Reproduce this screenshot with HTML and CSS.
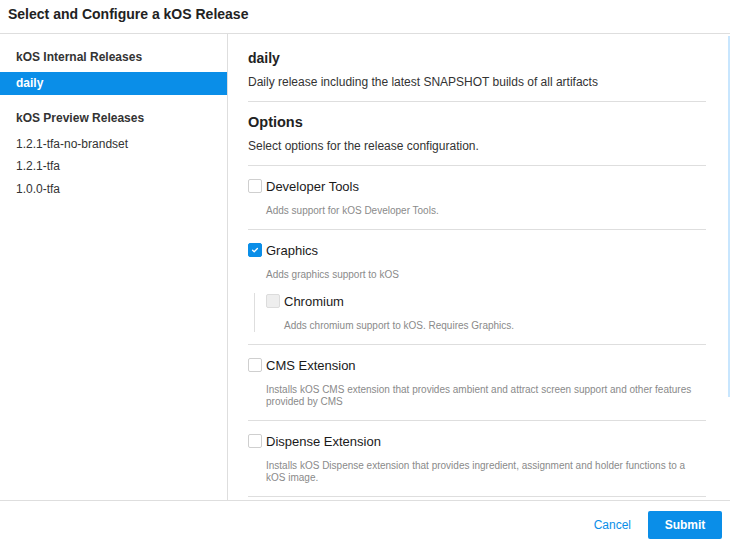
FILE: index.html
```html
<!DOCTYPE html>
<html lang="en">
<head>
<meta charset="utf-8">
<title>Select and Configure a kOS Release</title>
<link rel="stylesheet" href="styles.css">
</head>
<body>
<div class="dialog">
  <header class="dlg-header">
    <h1 class="dlg-title">Select and Configure a kOS Release</h1>
  </header>
  <div class="dlg-body">
    <nav class="sidebar">
      <div class="group">
        <div class="group-title">kOS Internal Releases</div>
        <div class="item selected">daily</div>
      </div>
      <div class="group">
        <div class="group-title">kOS Preview Releases</div>
        <div class="item">1.2.1-tfa-no-brandset</div>
        <div class="item">1.2.1-tfa</div>
        <div class="item">1.0.0-tfa</div>
      </div>
    </nav>
    <div class="content-wrap">
      <main class="content">
        <section class="release">
          <h2 class="release-name">daily</h2>
          <p class="release-desc">Daily release including the latest SNAPSHOT builds of all artifacts</p>
        </section>
        <section class="options">
          <h2 class="options-title">Options</h2>
          <p class="options-desc">Select options for the release configuration.</p>
        </section>
        <div class="option">
          <div class="opt-row"><span class="cb"></span><span class="opt-label">Developer Tools</span></div>
          <div class="opt-desc">Adds support for kOS Developer Tools.</div>
        </div>
        <div class="option">
          <div class="opt-row"><span class="cb checked"><svg viewBox="0 0 14 14" width="14" height="14"><path d="M4.6 7.3 L6.2 8.8 L9.4 5.5" fill="none" stroke="#fff" stroke-width="1.3" stroke-linecap="round" stroke-linejoin="round"/></svg></span><span class="opt-label">Graphics</span></div>
          <div class="opt-desc">Adds graphics support to kOS</div>
          <div class="sub-option">
            <div class="opt-row"><span class="cb disabled"></span><span class="opt-label">Chromium</span></div>
            <div class="opt-desc">Adds chromium support to kOS. Requires Graphics.</div>
          </div>
        </div>
        <div class="option">
          <div class="opt-row"><span class="cb"></span><span class="opt-label">CMS Extension</span></div>
          <div class="opt-desc">Installs kOS CMS extension that provides ambient and attract screen support and other features provided by CMS</div>
        </div>
        <div class="option">
          <div class="opt-row"><span class="cb"></span><span class="opt-label">Dispense Extension</span></div>
          <div class="opt-desc">Installs kOS Dispense extension that provides ingredient, assignment and holder functions to a kOS image.</div>
        </div>
      </main>
      <div class="scroll-thumb"></div>
    </div>
  </div>
  <footer class="dlg-footer">
    <button class="btn btn-text">Cancel</button>
    <button class="btn btn-primary">Submit</button>
  </footer>
</div>
</body>
</html>
```
FILE: styles.css
```css
html, body {
  margin: 0;
  padding: 0;
  background: #fff;
}
body {
  font-family: "Liberation Sans", Arial, sans-serif;
  color: #333;
}
.dialog {
  width: 730px;
  height: 543px;
  display: flex;
  flex-direction: column;
  overflow: hidden;
}
.dlg-header {
  padding: 6px 8px 11px;
  border-bottom: 1px solid #dedede;
}
.dlg-title {
  margin: 0;
  font-size: 14px;
  line-height: 16px;
  font-weight: bold;
  color: #222;
}
.dlg-body {
  display: flex;
  height: 466px;
  border-bottom: 1px solid #dedede;
}
.sidebar {
  width: 227px;
  border-right: 1px solid #dedede;
  padding-top: 14px;
  flex-shrink: 0;
}
.group + .group {
  margin-top: 14px;
}
.group-title {
  padding-left: 16px;
  font-size: 12px;
  font-weight: bold;
  line-height: 18px;
  color: #333;
  margin-bottom: 6px;
}
.item {
  padding-left: 16px;
  font-size: 12px;
  line-height: 22.5px;
  color: #333;
}
.item.selected {
  background: #0a8ee8;
  color: #fff;
  font-weight: bold;
}
.content-wrap {
  flex: 1;
  position: relative;
  overflow: hidden;
}
.content {
  height: 100%;
  box-sizing: border-box;
  overflow: hidden;
  padding: 16px 24px 0 20px;
}
.scroll-thumb {
  position: absolute;
  top: 2px;
  right: 0;
  width: 2px;
  height: 361px;
  background: #c8e6fe;
}
.release, .options {
  border-bottom: 1px solid #dedede;
}
.release {
  padding-bottom: 11px;
}
.release-name {
  margin: 0;
  font-size: 14px;
  line-height: 16px;
  font-weight: bold;
  color: #222;
}
.release-desc {
  margin: 8px 0 0;
  font-size: 12px;
  line-height: 16px;
  color: #333;
}
.options {
  padding-top: 11px;
  padding-bottom: 11px;
}
.options-title {
  margin: 0;
  font-size: 14.5px;
  line-height: 18px;
  font-weight: bold;
  color: #222;
}
.options-desc {
  margin: 7px 0 0;
  font-size: 12px;
  line-height: 16px;
  color: #333;
}
.option {
  padding: 12px 0;
  border-bottom: 1px solid #dedede;
}
.opt-row {
  display: flex;
  align-items: center;
  height: 16px;
}
.cb {
  width: 12px;
  height: 12px;
  border: 1px solid #cfcfcf;
  border-radius: 2px;
  background: #fff;
  flex-shrink: 0;
  display: flex;
  align-items: center;
  justify-content: center;
}
.cb svg {
  flex-shrink: 0;
}
.cb.checked {
  background: #0a8ee8;
  border-color: #0a8ee8;
}
.cb.disabled {
  background: #eeeeee;
  border-color: #dcdcdc;
}
.opt-label {
  margin-left: 4px;
  padding-top: 2px;
  font-size: 13px;
  line-height: 16px;
  color: #1a1a1a;
}
.opt-desc {
  margin-top: 11px;
  padding-left: 18px;
  font-size: 10px;
  line-height: 12px;
  color: #8a8a8a;
}
.sub-option {
  margin: 12px 0 0 6px;
  border-left: 1px solid #dedede;
  padding-left: 11px;
}
.dlg-footer {
  display: flex;
  justify-content: flex-end;
  align-items: flex-start;
  gap: 1px;
  padding: 10px 8px 0;
}
.btn {
  font-family: "Liberation Sans", Arial, sans-serif;
  font-size: 12px;
  height: 28px;
  padding: 0 16px;
  border: 0;
  border-radius: 2px;
  cursor: pointer;
}
.btn-text {
  background: transparent;
  color: #0a8ee8;
}
.btn-primary {
  background: #0a8ee8;
  color: #fff;
  font-weight: bold;
  width: 74px;
}
```
